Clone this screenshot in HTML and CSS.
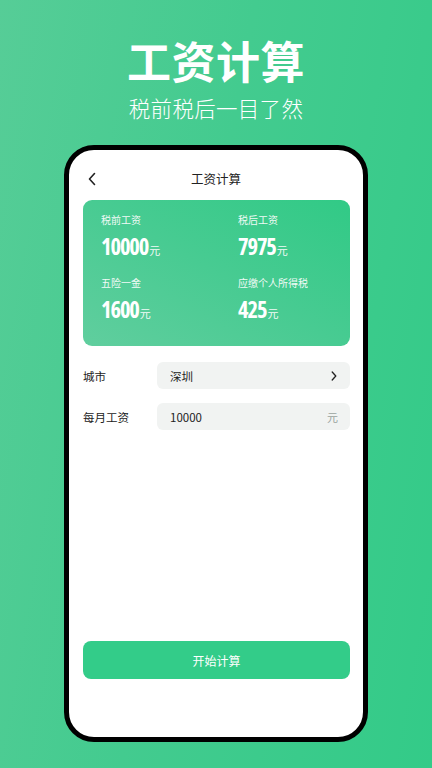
FILE: index.html
```html
<!DOCTYPE html>
<html lang="zh-CN">
<head>
<meta charset="utf-8">
<title>工资计算</title>
<link rel="stylesheet" href="styles.css">
</head>
<body>
<div class="screen">
  <div class="hero">
    <h1 class="hero-title">工资计算</h1>
    <p class="hero-sub">税前税后一目了然</p>
  </div>
  <div class="phone">
    <div class="header">
      <svg class="back" width="10" height="14" viewBox="0 0 10 14"><path d="M7.5 1.5 L2.5 7 L7.5 12.5" fill="none" stroke="#222" stroke-width="1.6" stroke-linecap="round" stroke-linejoin="round"/></svg>
      <div class="header-title">工资计算</div>
    </div>
    <div class="card">
      <div class="stat">
        <div class="stat-label">税前工资</div>
        <div class="stat-value"><span class="num">10000</span><span class="unit">元</span></div>
      </div>
      <div class="stat">
        <div class="stat-label">税后工资</div>
        <div class="stat-value"><span class="num">7975</span><span class="unit">元</span></div>
      </div>
      <div class="stat">
        <div class="stat-label">五险一金</div>
        <div class="stat-value"><span class="num">1600</span><span class="unit">元</span></div>
      </div>
      <div class="stat">
        <div class="stat-label">应缴个人所得税</div>
        <div class="stat-value"><span class="num">425</span><span class="unit">元</span></div>
      </div>
    </div>
    <div class="form">
      <div class="row">
        <div class="row-label">城市</div>
        <div class="field">
          <span class="field-text">深圳</span>
          <svg class="chev" width="8" height="12" viewBox="0 0 8 12"><path d="M2.2 2 L5.8 6 L2.2 10" fill="none" stroke="#222" stroke-width="1.3" stroke-linecap="round" stroke-linejoin="round"/></svg>
        </div>
      </div>
      <div class="row">
        <div class="row-label">每月工资</div>
        <div class="field">
          <span class="field-text">10000</span>
          <span class="field-unit">元</span>
        </div>
      </div>
    </div>
    <button class="btn">开始计算</button>
  </div>
</div>
</body>
</html>
```
FILE: styles.css
```css
* { box-sizing: border-box; margin: 0; padding: 0; }
html, body { width: 432px; height: 768px; overflow: hidden; }
body {
  font-family: "Noto Sans CJK SC", "Noto Sans", sans-serif;
  background: linear-gradient(100deg, #56cd97 0%, #43cb8f 45%, #33cb88 100%);
}
.screen { width: 432px; height: 768px; display: flex; flex-direction: column; align-items: center; }
.hero { padding-top: 36px; text-align: center; color: #fff; }
.hero-title { font-size: 44px; line-height: 48px; font-weight: 700; letter-spacing: 0.5px; }
.hero-sub { margin-top: 11px; font-size: 21.5px; line-height: 26px; font-weight: 300; letter-spacing: 0.3px; }
.phone {
  margin-top: 24px;
  width: 304px;
  height: 597px;
  border: 5px solid #000;
  border-radius: 30px;
  background: #fff;
  display: flex;
  flex-direction: column;
}
.header { position: relative; height: 50px; padding-top: 8px; display: flex; align-items: center; justify-content: center; }
.back { position: absolute; left: 18px; top: 22px; }
.header-title { font-size: 12.5px; color: #222; line-height: 42px; }
.card {
  margin: 0 13px 0 14px;
  height: 146px;
  border-radius: 9px;
  background: linear-gradient(30deg, #60ce9e 0%, #48cb92 50%, #31ca86 100%);
  padding: 13px 0 0 18px;
  display: grid;
  grid-template-columns: 137px 1fr;
  row-gap: 15px;
  align-content: start;
}
.stat { color: #fff; }
.stat-label { font-size: 10px; line-height: 14px; opacity: 0.92; }
.stat-value { margin-top: 6px; line-height: 28px; height: 28px; white-space: nowrap; }
.num { font-family: "Open Sans", "DejaVu Sans", sans-serif; font-stretch: 75%; font-weight: 700; font-size: 22.5px; letter-spacing: -1.1px; }
.unit { font-size: 11px; margin-left: 1px; opacity: 0.92; }
.form { margin: 16px 13px 0 14px; display: flex; flex-direction: column; gap: 14px; }
.row { display: flex; align-items: center; }
.row-label { width: 74px; font-size: 11.5px; color: #222; }
.field {
  flex: 1;
  height: 27px;
  border-radius: 6px;
  background: #f1f3f2;
  display: flex;
  align-items: center;
  justify-content: space-between;
  padding: 0 12px 0 13px;
  font-size: 11.5px;
  color: #222;
}
.field-unit { color: #9aa39f; font-size: 11px; }
.btn {
  margin: auto 13px 58px 14px;
  height: 38px;
  border: none;
  border-radius: 8px;
  background: #33cc89;
  color: #fff;
  font-family: "Noto Sans CJK SC", sans-serif;
  font-size: 12px;
}
```
